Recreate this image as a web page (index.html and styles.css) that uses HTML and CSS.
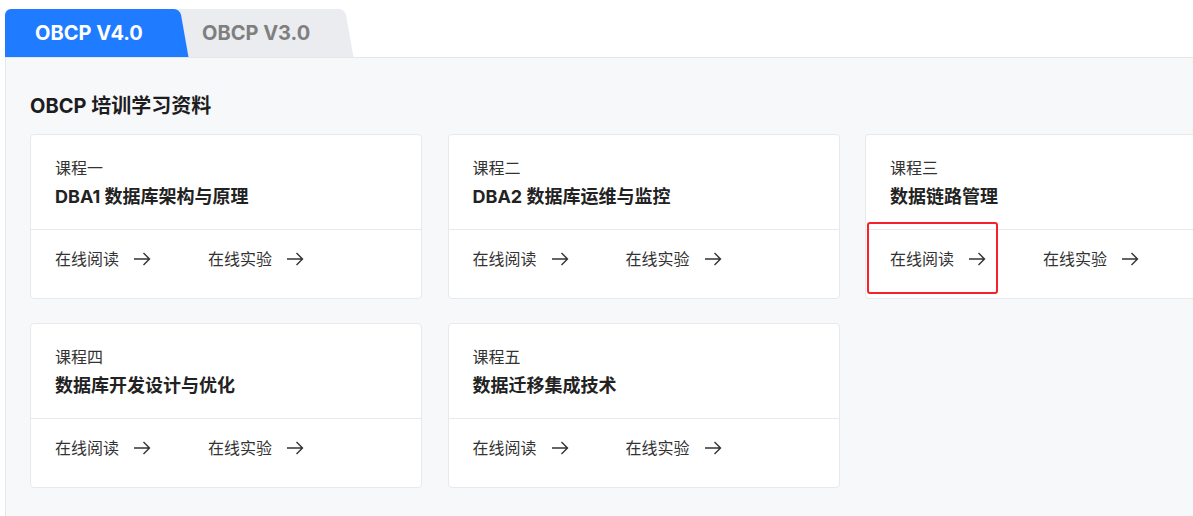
FILE: index.html
```html
<!DOCTYPE html>
<html lang="zh-CN">

<head>
    <meta charset="UTF-8">
    <title>OBCP 培训学习资料</title>
    <link rel="stylesheet" href="styles.css">
</head>

<body>
    <div class="page">
        <div class="tabs">
            <div class="tab active">OBCP V4.0</div>
            <div class="tab">OBCP V3.0</div>
        </div>

        <div class="panel">
            <h2 class="panel-title">OBCP 培训学习资料</h2>

            <div class="course-grid">
                <div class="course">
                    <div class="course-head">
                        <div class="course-no">课程一</div>
                        <div class="course-name">DBA1 数据库架构与原理</div>
                    </div>
                    <div class="course-links">
                        <a class="link">在线阅读 <svg width="18" height="14" viewBox="0 0 18 14"><path d="M1 7h15.5M10.5 1l6 6-6 6" /></svg></a>
                        <a class="link">在线实验 <svg width="18" height="14" viewBox="0 0 18 14"><path d="M1 7h15.5M10.5 1l6 6-6 6" /></svg></a>
                    </div>
                </div>

                <div class="course">
                    <div class="course-head">
                        <div class="course-no">课程二</div>
                        <div class="course-name">DBA2 数据库运维与监控</div>
                    </div>
                    <div class="course-links">
                        <a class="link">在线阅读 <svg width="18" height="14" viewBox="0 0 18 14"><path d="M1 7h15.5M10.5 1l6 6-6 6" /></svg></a>
                        <a class="link">在线实验 <svg width="18" height="14" viewBox="0 0 18 14"><path d="M1 7h15.5M10.5 1l6 6-6 6" /></svg></a>
                    </div>
                </div>

                <div class="course">
                    <div class="course-head">
                        <div class="course-no">课程三</div>
                        <div class="course-name">数据链路管理</div>
                    </div>
                    <div class="course-links">
                        <a class="link">在线阅读 <svg width="18" height="14" viewBox="0 0 18 14"><path d="M1 7h15.5M10.5 1l6 6-6 6" /></svg></a>
                        <a class="link">在线实验 <svg width="18" height="14" viewBox="0 0 18 14"><path d="M1 7h15.5M10.5 1l6 6-6 6" /></svg></a>
                    </div>
                    <div class="highlight"></div>
                </div>

                <div class="course">
                    <div class="course-head">
                        <div class="course-no">课程四</div>
                        <div class="course-name">数据库开发设计与优化</div>
                    </div>
                    <div class="course-links">
                        <a class="link">在线阅读 <svg width="18" height="14" viewBox="0 0 18 14"><path d="M1 7h15.5M10.5 1l6 6-6 6" /></svg></a>
                        <a class="link">在线实验 <svg width="18" height="14" viewBox="0 0 18 14"><path d="M1 7h15.5M10.5 1l6 6-6 6" /></svg></a>
                    </div>
                </div>

                <div class="course">
                    <div class="course-head">
                        <div class="course-no">课程五</div>
                        <div class="course-name">数据迁移集成技术</div>
                    </div>
                    <div class="course-links">
                        <a class="link">在线阅读 <svg width="18" height="14" viewBox="0 0 18 14"><path d="M1 7h15.5M10.5 1l6 6-6 6" /></svg></a>
                        <a class="link">在线实验 <svg width="18" height="14" viewBox="0 0 18 14"><path d="M1 7h15.5M10.5 1l6 6-6 6" /></svg></a>
                    </div>
                </div>
            </div>
        </div>
    </div>
</body>

</html>
```

FILE: styles.css
```css
body {
    margin: 0;
    padding: 0;
    background-color: #fff;
    color: #333;
    font-family: Inter, "Noto Sans CJK SC", sans-serif;
    overflow: hidden;
}

.page {
    padding: 9px 0 0 5px;
    height: 100vh;
    box-sizing: border-box;
    display: flex;
    flex-direction: column;
}

.tabs {
    display: flex;
    height: 48px;
    flex-shrink: 0;
}

.tab {
    position: relative;
    display: flex;
    align-items: center;
    height: 48px;
    box-sizing: border-box;
    font-size: 20px;
    font-weight: 700;
    color: #7f7f80;
    background-color: #ebecf0;
    border-top-left-radius: 6px;
    width: 168px;
    margin-left: -3px;
    padding-left: 37px;
    z-index: 1;
}

.tab::after {
    content: "";
    position: absolute;
    top: 0;
    right: -12px;
    width: 24px;
    height: 100%;
    background: inherit;
    border-top-right-radius: 6px;
    transform: skewX(10deg);
    transform-origin: top left;
}

.tab.active {
    color: #fff;
    background-color: #1f7bff;
    width: 163px;
    margin-left: 0;
    padding-left: 30px;
    z-index: 2;
}

.panel {
    flex: 1;
    overflow: hidden;
    background-color: #f7f8fa;
    border-top: 1px solid #e6e7eb;
    border-left: 1px solid #e6e7eb;
    padding: 24px 0 0 24px;
}

.panel-title {
    margin: 0 0 4px;
    font-size: 20px;
    line-height: 48px;
    font-weight: 700;
    color: #1d1d1f;
}

.course-grid {
    display: grid;
    grid-template-columns: repeat(3, 392px);
    column-gap: 25.5px;
    row-gap: 24px;
}

.course {
    position: relative;
    background-color: #fff;
    border: 1px solid #e8e9ed;
    border-radius: 4px;
}

.course-head {
    padding: 23px 24px 20px;
    border-bottom: 1px solid #e8e9ed;
}

.course-no {
    font-size: 16px;
    line-height: 20px;
    color: #333;
}

.course-name {
    margin-top: 7px;
    font-size: 18px;
    line-height: 24px;
    font-weight: 700;
    color: #222;
}

.course-links {
    display: flex;
    padding: 18px 24px 28px;
}

.link {
    display: flex;
    align-items: center;
    gap: 14px;
    width: 153px;
    font-size: 16px;
    line-height: 22px;
    color: #333;
    cursor: pointer;
}

.link svg {
    fill: none;
    stroke: #333;
    stroke-width: 1.4;
}

.highlight {
    position: absolute;
    left: 1px;
    top: 87px;
    width: 131px;
    height: 72px;
    box-sizing: border-box;
    border: 2px solid #f5222d;
    border-radius: 3px;
}
```
